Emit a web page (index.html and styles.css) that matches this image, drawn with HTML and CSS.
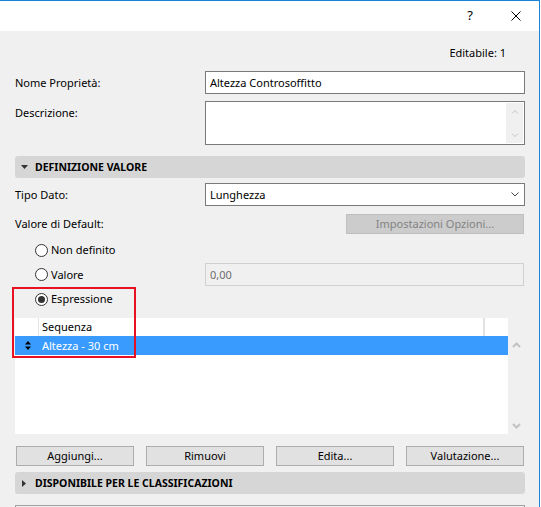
FILE: index.html
```html
<!DOCTYPE html>
<html lang="it">
<head>
<meta charset="utf-8">
<title>Proprietà</title>
<link rel="stylesheet" href="styles.css">
</head>
<body>
<div class="window">
  <div class="titlebar">
    <div class="tbtn help">?</div>
    <div class="tbtn close">
      <svg width="10" height="10" viewBox="0 0 10 10"><path d="M0.5 0.5L9.5 9.5M9.5 0.5L0.5 9.5" stroke="#000" stroke-width="1" fill="none"/></svg>
    </div>
  </div>
  <div class="content">
    <div class="editable">Editabile: 1</div>

    <div class="row row-name">
      <div class="label">Nome Proprietà:</div>
      <div class="field input">Altezza Controsoffitto</div>
    </div>

    <div class="row row-desc">
      <div class="label label-top">Descrizione:</div>
      <div class="field textarea">
        <div class="area-text"></div>
        <div class="vscroll small">
          <svg width="8" height="5" viewBox="0 0 8 5"><path d="M1 4.5L4 1.5L7 4.5" stroke="#c4c4c4" stroke-width="1" fill="none"/></svg>
          <svg width="8" height="5" viewBox="0 0 8 5"><path d="M1 0.5L4 3.5L7 0.5" stroke="#c4c4c4" stroke-width="1" fill="none"/></svg>
        </div>
      </div>
    </div>

    <div class="section section-first">
      <svg class="tri" width="7" height="4" viewBox="0 0 7 4"><path d="M0 0H7L3.5 4Z" fill="#333"/></svg>
      <span>DEFINIZIONE VALORE</span>
    </div>

    <div class="row row-type">
      <div class="label">Tipo Dato:</div>
      <div class="field input select">
        <span>Lunghezza</span>
        <svg width="8" height="5" viewBox="0 0 8 5"><path d="M0.5 0.5L4 4L7.5 0.5" stroke="#444" stroke-width="1" fill="none"/></svg>
      </div>
    </div>

    <div class="row row-default">
      <div class="label">Valore di Default:</div>
      <div class="btn disabled">Impostazioni Opzioni...</div>
    </div>

    <div class="radio-row r1">
      <span class="radio"></span><span class="rlabel">Non definito</span>
    </div>
    <div class="radio-row r2">
      <div class="radio-part"><span class="radio"></span><span class="rlabel">Valore</span></div>
      <div class="field input dis">0,00</div>
    </div>
    <div class="radio-row r3">
      <span class="radio checked"></span><span class="rlabel">Espressione</span>
    </div>

    <div class="list">
      <div class="list-main">
        <div class="list-head">
          <div class="col c0"></div>
          <div class="col c1">Sequenza</div>
          <div class="col c2"></div>
        </div>
        <div class="list-row selected">
          <div class="col c0">
            <svg width="6" height="9" viewBox="0 0 6 9"><path d="M0 3.5H6L3 0Z M0 5.5H6L3 9Z" fill="#000"/></svg>
          </div>
          <div class="col c1">Altezza - 30 cm</div>
        </div>
      </div>
      <div class="vscroll big">
        <svg width="9" height="6" viewBox="0 0 9 6"><path d="M1 5L4.5 1.5L8 5" stroke="#c2c2c2" stroke-width="2" fill="none"/></svg>
        <svg width="9" height="6" viewBox="0 0 9 6"><path d="M1 1L4.5 4.5L8 1" stroke="#c2c2c2" stroke-width="2" fill="none"/></svg>
      </div>
    </div>

    <div class="buttons">
      <div class="btn">Aggiungi...</div>
      <div class="btn">Rimuovi</div>
      <div class="btn">Edita...</div>
      <div class="btn">Valutazione...</div>
    </div>

    <div class="section section-second">
      <svg class="tri" width="4" height="7" viewBox="0 0 4 7"><path d="M0 0V7L4 3.5Z" fill="#333"/></svg>
      <span>DISPONIBILE PER LE CLASSIFICAZIONI</span>
    </div>

    <div class="next-box"></div>
  </div>
  <div class="highlight"></div>
</div>
</body>
</html>
```

FILE: styles.css
```css
* { box-sizing: border-box; }
html, body { margin: 0; padding: 0; background: #ffffff; }
body {
  font-family: "Noto Sans", "Open Sans", sans-serif;
  font-size: 11px;
  color: #000;
}
.window {
  position: relative;
  width: 540px;
  height: 507px;
  overflow: hidden;
  background: #f0f0f0;
  border-top: 1px solid #1883d7;
  border-right: 1px solid #1883d7;
}
.titlebar {
  height: 30px;
  background: #ffffff;
  display: flex;
  justify-content: flex-end;
}
.tbtn {
  width: 46px;
  height: 30px;
  display: flex;
  align-items: center;
  justify-content: center;
}
.help { font-size: 13px; line-height: 1; padding-bottom: 1px; }
.content {
  padding: 0 14px 0 15px;
}
.editable {
  margin-top: 14px;
  height: 16px;
  line-height: 16px;
  text-align: right;
  padding-right: 19px;
}
.row {
  display: flex;
  align-items: center;
}
.label {
  width: 190px;
  flex: none;
  line-height: 16px;
}
.label-top { align-self: flex-start; padding-top: 4px; }
.field {
  flex: 1;
  background: #fff;
  border: 1px solid #7a7a7a;
}
.input {
  height: 23px;
  line-height: 21px;
  padding: 0 4px;
  white-space: nowrap;
}
.row-name { margin-top: 10px; }
.row-desc { margin-top: 7px; align-items: flex-start; }
.textarea {
  height: 44px;
  padding: 1px;
  display: flex;
}
.area-text { flex: 1; }
.vscroll {
  display: flex;
  flex-direction: column;
  align-items: center;
  justify-content: space-between;
  background: #f0f0f0;
}
.vscroll.small {
  width: 17px;
  padding: 6px 0 5px 1px;
}
.section {
  height: 22px;
  background: #d6d6d6;
  border-radius: 3px;
  display: flex;
  align-items: center;
  font-weight: bold;
  font-size: 10.5px;
}
.section .tri { margin-left: 6px; margin-right: 7px; }
.section-first { margin-top: 11px; }
.section-second { margin-top: 6px; }
.section-second .tri { margin-left: 7px; margin-right: 9px; }
.row-type { margin-top: 5px; }
.select {
  display: flex;
  align-items: center;
  justify-content: space-between;
  padding-right: 5px;
}
.row-default {
  margin-top: 8px;
  justify-content: space-between;
  padding-right: 1px;
}
.btn {
  height: 20px;
  line-height: 18px;
  text-align: center;
  background: #e1e1e1;
  border: 1px solid #adadad;
}
.btn.disabled {
  width: 178px;
  background: #cccccc;
  border-color: #bfbfbf;
  color: #838383;
}
.radio-row {
  display: flex;
  align-items: center;
  padding-left: 20px;
}
.radio-part {
  width: 170px;
  flex: none;
  display: flex;
  align-items: center;
}
.radio {
  width: 13px;
  height: 13px;
  border: 1px solid #333;
  border-radius: 50%;
  background: #fff;
  margin-right: 3px;
  flex: none;
  display: flex;
  align-items: center;
  justify-content: center;
}
.radio.checked::after {
  content: "";
  width: 7px;
  height: 7px;
  border-radius: 50%;
  background: #333;
}
.rlabel { line-height: 16px; }
.r1 { margin-top: 6px; height: 20px; }
.r2 { margin-top: 3px; padding-right: 1px; }
.r2 .field { height: 23px; }
.dis {
  background: #f0f0f0;
  border-color: #d0d0d0;
  color: #6d6d6d;
}
.r3 { margin-top: 3px; height: 20px; }
.list {
  margin-top: 9px;
  display: flex;
  height: 116px;
}
.list-main {
  width: 493px;
  flex: none;
  background: #fff;
}
.list-head, .list-row {
  display: flex;
  align-items: stretch;
}
.list-head { height: 18px; }
.list-row { height: 19px; }
.col {
  display: flex;
  align-items: center;
  line-height: 16px;
}
.c0 { width: 24px; justify-content: center; padding-left: 1px; }
.c1 { flex: 1; padding-left: 3px; }
.c2 { width: 25px; }
.list-head .c0 { border-right: 1px solid #e3e3e3; }
.list-head .c2 { border-left: 2px solid #e3e3e3; }
.selected { background: #3a9bff; color: #fff; }
.vscroll.big {
  width: 16px;
  margin-top: 18px;
  padding: 6px 0 5px 1px;
}
.buttons {
  margin-top: 12px;
  display: grid;
  grid-template-columns: repeat(4, 118px);
  column-gap: 12px;
  padding-left: 1px;
}
.next-box {
  margin-top: 11px;
  height: 40px;
  border: 1px solid #a0a0a0;
  background: #f0f0f0;
}
.highlight {
  position: absolute;
  left: 12px;
  top: 286px;
  width: 124px;
  height: 71px;
  border: 2px solid #e81123;
}
```
